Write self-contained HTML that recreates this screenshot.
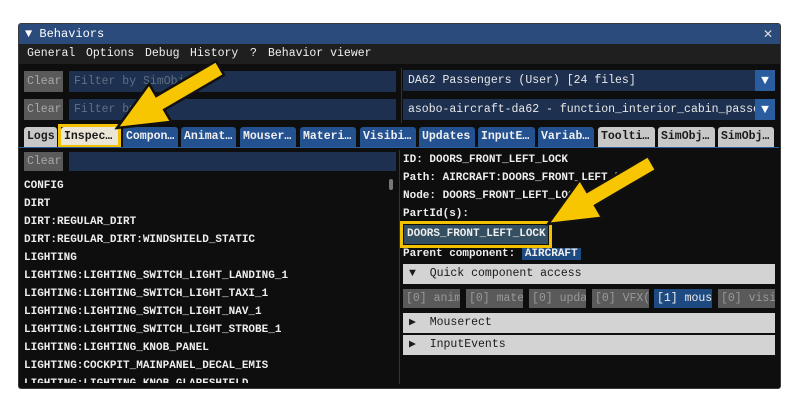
<!DOCTYPE html>
<html><head><style>
*{margin:0;padding:0;box-sizing:border-box}
body{width:800px;height:413px;background:#fff;position:relative;overflow:hidden;font-family:"Liberation Mono",monospace;font-size:11.5px;color:#e8e8e8}
.a{position:absolute;white-space:nowrap;overflow:hidden}
.win{left:18px;top:23px;width:763px;height:366px;background:#0e0e0e;border:1px solid #3a3a3a;border-radius:3px}
.btn{background:#5a5a5a;color:#a8a8a8;height:21px;line-height:21px;padding-left:3px;width:39px}
.inp{background:#1d3050;color:#5f6f85;height:21px;line-height:21px;padding-left:5px}
.dd{background:#1d3050;color:#e8e8e8;height:21px;line-height:21px;padding-left:5px}
.arr{background:#2a5da0;width:20px;height:21px}
.tab{height:20px;line-height:20px;padding-left:3px;border-radius:3px 3px 0 0;background:#245190;color:#f0f0f0;font-weight:bold}
.tg{background:#c8c8c8;color:#1a1a1a}
.li{left:24px;color:#eee;font-weight:bold;font-size:11px}
.hd{background:#d3d3d3;color:#1a1a1a;height:20px;line-height:20px;padding-left:6px}
.qb{background:#5a5a5a;color:#999;height:19px;line-height:19px;padding-left:3px}
.m{top:44px;line-height:20px;color:#f0f0f0;font-size:11.5px}
</style></head><body>
<div class="a win"></div>
<div class="a" style="left:19px;top:24px;width:761px;height:20px;background:#2b4b7c;color:#fff;line-height:20px;padding-left:6px;font-size:12px">▼ Behaviors</div>
<div class="a" style="left:763px;top:24px;color:#ddd;font-size:12px;line-height:20px;font-family:'DejaVu Sans',sans-serif">✕</div>
<div class="a" style="left:19px;top:44px;width:761px;height:20px;background:#1f1f1f"></div>
<div class="a m" style="left:27px">General</div>
<div class="a m" style="left:86px">Options</div>
<div class="a m" style="left:145px">Debug</div>
<div class="a m" style="left:190px">History</div>
<div class="a m" style="left:250px">?</div>
<div class="a m" style="left:268px">Behavior viewer</div>

<div class="a btn" style="left:24px;top:71px">Clear</div>
<div class="a inp" style="left:69px;top:71px;width:327px">Filter by SimObject</div>
<div class="a btn" style="left:24px;top:99px">Clear</div>
<div class="a inp" style="left:69px;top:99px;width:327px">Filter by</div>
<div class="a" style="left:401px;top:68px;width:1px;height:55px;background:#333"></div>
<div class="a dd" style="left:403px;top:70px;width:352px">DA62 Passengers (User) [24 files]</div>
<div class="a arr" style="left:755px;top:70px;color:#fff;text-align:center;line-height:21px;font-size:13px">▼</div>
<div class="a dd" style="left:403px;top:99px;width:352px">asobo-aircraft-da62 - function_interior_cabin_passeng</div>
<div class="a arr" style="left:755px;top:99px;color:#fff;text-align:center;line-height:21px;font-size:13px">▼</div>

<div class="a tab tg" style="left:24px;top:127px;width:33px">Logs</div>
<div class="a tab" style="left:61px;top:127px;width:57px;background:#ebe6d6;color:#1a1a1a">Inspec…</div>
<div class="a" style="left:58px;top:124px;width:63px;height:24px;border:3px solid #f2c200"></div>
<div class="a tab" style="left:123px;top:127px;width:55px">Compon…</div>
<div class="a tab" style="left:181px;top:127px;width:55px">Animat…</div>
<div class="a tab" style="left:240px;top:127px;width:56px">Mouser…</div>
<div class="a tab" style="left:300px;top:127px;width:56px">Materi…</div>
<div class="a tab" style="left:360px;top:127px;width:56px">Visibi…</div>
<div class="a tab" style="left:419px;top:127px;width:56px">Updates</div>
<div class="a tab" style="left:478px;top:127px;width:57px">InputE…</div>
<div class="a tab" style="left:538px;top:127px;width:56px">Variab…</div>
<div class="a tab tg" style="left:598px;top:127px;width:57px">Toolti…</div>
<div class="a tab tg" style="left:658px;top:127px;width:57px">SimObj…</div>
<div class="a tab tg" style="left:718px;top:127px;width:56px">SimObj…</div>
<div class="a" style="left:19px;top:147px;width:760px;height:1px;background:#2a5da0"></div>

<div class="a btn" style="left:24px;top:152px;height:19px;line-height:19px">Clear</div>
<div class="a inp" style="left:69px;top:152px;width:327px;height:19px"></div>
<div class="a" style="left:399px;top:150px;width:1px;height:234px;background:#333"></div>
<div class="a" style="left:389px;top:179px;width:4px;height:11px;background:#777;border-radius:2px"></div>
<div class="a li" style="top:180px">CONFIG</div>
<div class="a li" style="top:198px">DIRT</div>
<div class="a li" style="top:216px">DIRT:REGULAR_DIRT</div>
<div class="a li" style="top:234px">DIRT:REGULAR_DIRT:WINDSHIELD_STATIC</div>
<div class="a li" style="top:252px">LIGHTING</div>
<div class="a li" style="top:270px">LIGHTING:LIGHTING_SWITCH_LIGHT_LANDING_1</div>
<div class="a li" style="top:288px">LIGHTING:LIGHTING_SWITCH_LIGHT_TAXI_1</div>
<div class="a li" style="top:306px">LIGHTING:LIGHTING_SWITCH_LIGHT_NAV_1</div>
<div class="a li" style="top:324px">LIGHTING:LIGHTING_SWITCH_LIGHT_STROBE_1</div>
<div class="a li" style="top:342px">LIGHTING:LIGHTING_KNOB_PANEL</div>
<div class="a li" style="top:360px">LIGHTING:COCKPIT_MAINPANEL_DECAL_EMIS</div>
<div class="a li" style="top:378px;height:5px">LIGHTING:LIGHTING_KNOB_GLARESHIELD</div>

<div class="a li" style="left:403px;top:154px">ID: DOORS_FRONT_LEFT_LOCK</div>
<div class="a li" style="left:403px;top:172px">Path: AIRCRAFT:DOORS_FRONT_LEFT_LOCK</div>
<div class="a li" style="left:403px;top:190px">Node: DOORS_FRONT_LEFT_LOCK</div>
<div class="a li" style="left:403px;top:208px">PartId(s):</div>
<div class="a" style="left:404px;top:225px;width:144px;height:19px;background:#344e62;color:#eee;line-height:19px;padding-left:3px;font-size:11px;font-weight:bold">DOORS_FRONT_LEFT_LOCK</div>
<div class="a" style="left:400px;top:221px;width:152px;height:27px;border:3px solid #f2c200"></div>
<div class="a li" style="left:403px;top:248px">Parent component: <span style="background:#1d4a80;padding:1px 3px">AIRCRAFT</span></div>
<div class="a hd" style="left:403px;top:264px;width:372px">▼&nbsp; Quick component access</div>
<div class="a qb" style="left:403px;top:289px;width:57px">[0] anim</div>
<div class="a qb" style="left:466px;top:289px;width:57px">[0] mate</div>
<div class="a qb" style="left:529px;top:289px;width:57px">[0] upda</div>
<div class="a qb" style="left:592px;top:289px;width:57px">[0] VFX(</div>
<div class="a qb" style="left:654px;top:289px;width:58px;background:#1d4a80;color:#eee">[1] mous</div>
<div class="a qb" style="left:718px;top:289px;width:57px">[0] visi</div>
<div class="a hd" style="left:403px;top:313px;width:372px">▶&nbsp; Mouserect</div>
<div class="a hd" style="left:403px;top:335px;width:372px">▶&nbsp; InputEvents</div>

<svg class="a" style="left:0;top:0" width="800" height="413">
<polygon points="117,128 149.1,83.9 156.2,96 216,61.1 224,74.9 164.2,109.8 171.3,121.9" fill="#f7c600" stroke="#111" stroke-width="2.5" stroke-linejoin="miter"/>
<polygon points="548,224 580,179.7 587.1,191.8 648,156.1 656,169.9 595.1,205.6 602.2,217.7" fill="#f7c600" stroke="#111" stroke-width="2.5" stroke-linejoin="miter"/>
</svg>
</body></html>
